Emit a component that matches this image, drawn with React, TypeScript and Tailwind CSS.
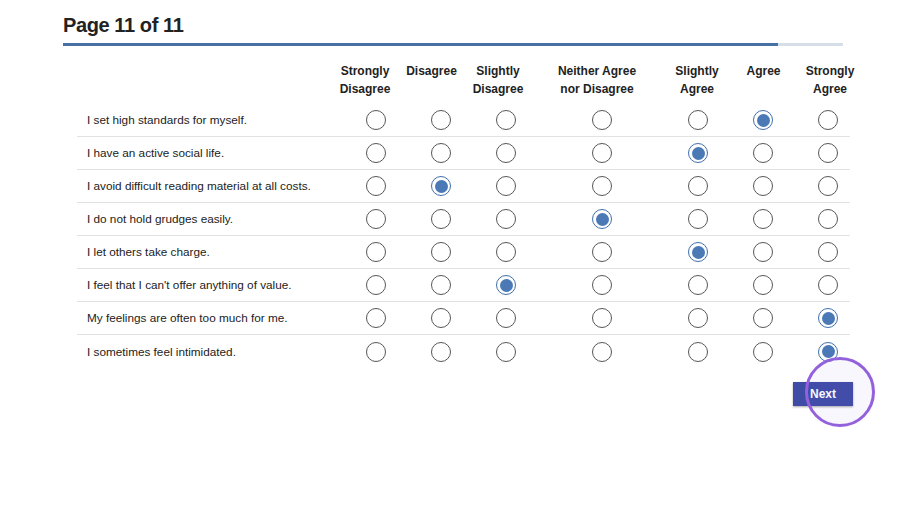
import React from 'react';

interface Column {
    lines: string[];
    headClass: string;
}

const columns: Column[] = [
    { lines: ['Strongly', 'Disagree'], headClass: 'pr-[22px]' },
    { lines: ['Disagree'], headClass: 'pr-[19px]' },
    { lines: ['Slightly', 'Disagree'], headClass: 'pr-[16px]' },
    { lines: ['Neither Agree', 'nor Disagree'], headClass: 'pr-[10px]' },
    { lines: ['Slightly', 'Agree'], headClass: 'pr-[2px]' },
    { lines: ['Agree'], headClass: 'pl-[1px]' },
    { lines: ['Strongly', 'Agree'], headClass: 'pl-[4px]' },
];

// picked = column index (0..6)
const questions = [
    { text: 'I set high standards for myself.', picked: 5 },
    { text: 'I have an active social life.', picked: 4 },
    { text: 'I avoid difficult reading material at all costs.', picked: 1 },
    { text: 'I do not hold grudges easily.', picked: 3 },
    { text: 'I let others take charge.', picked: 4 },
    { text: "I feel that I can't offer anything of value.", picked: 2 },
    { text: 'My feelings are often too much for me.', picked: 6 },
    { text: 'I sometimes feel intimidated.', picked: 6 },
];

const grid = 'grid grid-cols-[266px_66px_64px_66px_126px_66px_64px_55px] w-[773px]';

function Radio({ checked }: { checked: boolean }) {
    if (checked) {
        return (
            <div className="w-[20px] h-[20px] rounded-full border-[1.5px] border-[#3f6fae] flex items-center justify-center bg-white">
                <div className="w-[13px] h-[13px] rounded-full bg-[#4a79b6]" />
            </div>
        );
    }
    return <div className="w-[20px] h-[20px] rounded-full border-[1.5px] border-[#575757] bg-white" />;
}

export default function App() {
    return (
        <div className="w-[906px] h-[506px] bg-white text-[#222] font-['Liberation_Sans',Arial,sans-serif] pl-[63px] pt-[11px]">
            <div className="text-[20px] leading-[28px] font-semibold tracking-[-0.4px]">Page 11 of 11</div>
            <div className="mt-[4px] w-[780px] h-[3px] bg-[#d6dee9]">
                <div className="h-full w-[715px] bg-[#4872a6]" />
            </div>

            <div className="ml-[14px]">
                <div className={`${grid} pt-[16px] pb-[6px]`}>
                    <div />
                    {columns.map((col, i) => (
                        <div key={i} className={i === 6 ? 'w-[66px]' : ''}>
                            <div className={`flex flex-col items-center text-[12px] leading-[18px] font-bold whitespace-nowrap ${col.headClass}`}>
                                {col.lines.map((l) => (
                                    <span key={l}>{l}</span>
                                ))}
                            </div>
                        </div>
                    ))}
                </div>

                {questions.map((q, r) => (
                    <div
                        key={r}
                        className={`${grid} h-[33px] items-center ${r < questions.length - 1 ? 'border-b border-[#e2e2e2]' : ''}`}
                    >
                        <div className="pl-[10px] text-[11.75px]">{q.text}</div>
                        {columns.map((_, c) => (
                            <div key={c} className={c === 6 ? 'flex justify-start pl-[23px]' : 'flex justify-center'}>
                                <Radio checked={q.picked === c} />
                            </div>
                        ))}
                    </div>
                ))}

                <div className="w-[776px] flex justify-end mt-[14px]">
                    <div className="relative">
                        <div className="w-[60px] h-[24px] bg-[#3f4ca6] text-white text-[12px] font-bold flex items-center justify-center shadow-[0_1px_2px_rgba(0,0,0,0.35)]">
                            Next
                        </div>
                        <div className="absolute left-[12px] top-[-25px] w-[70px] h-[70px] rounded-full border-[3px] border-[#9461dd] bg-[#7b5ad6]/5" />
                    </div>
                </div>
            </div>
        </div>
    );
}
